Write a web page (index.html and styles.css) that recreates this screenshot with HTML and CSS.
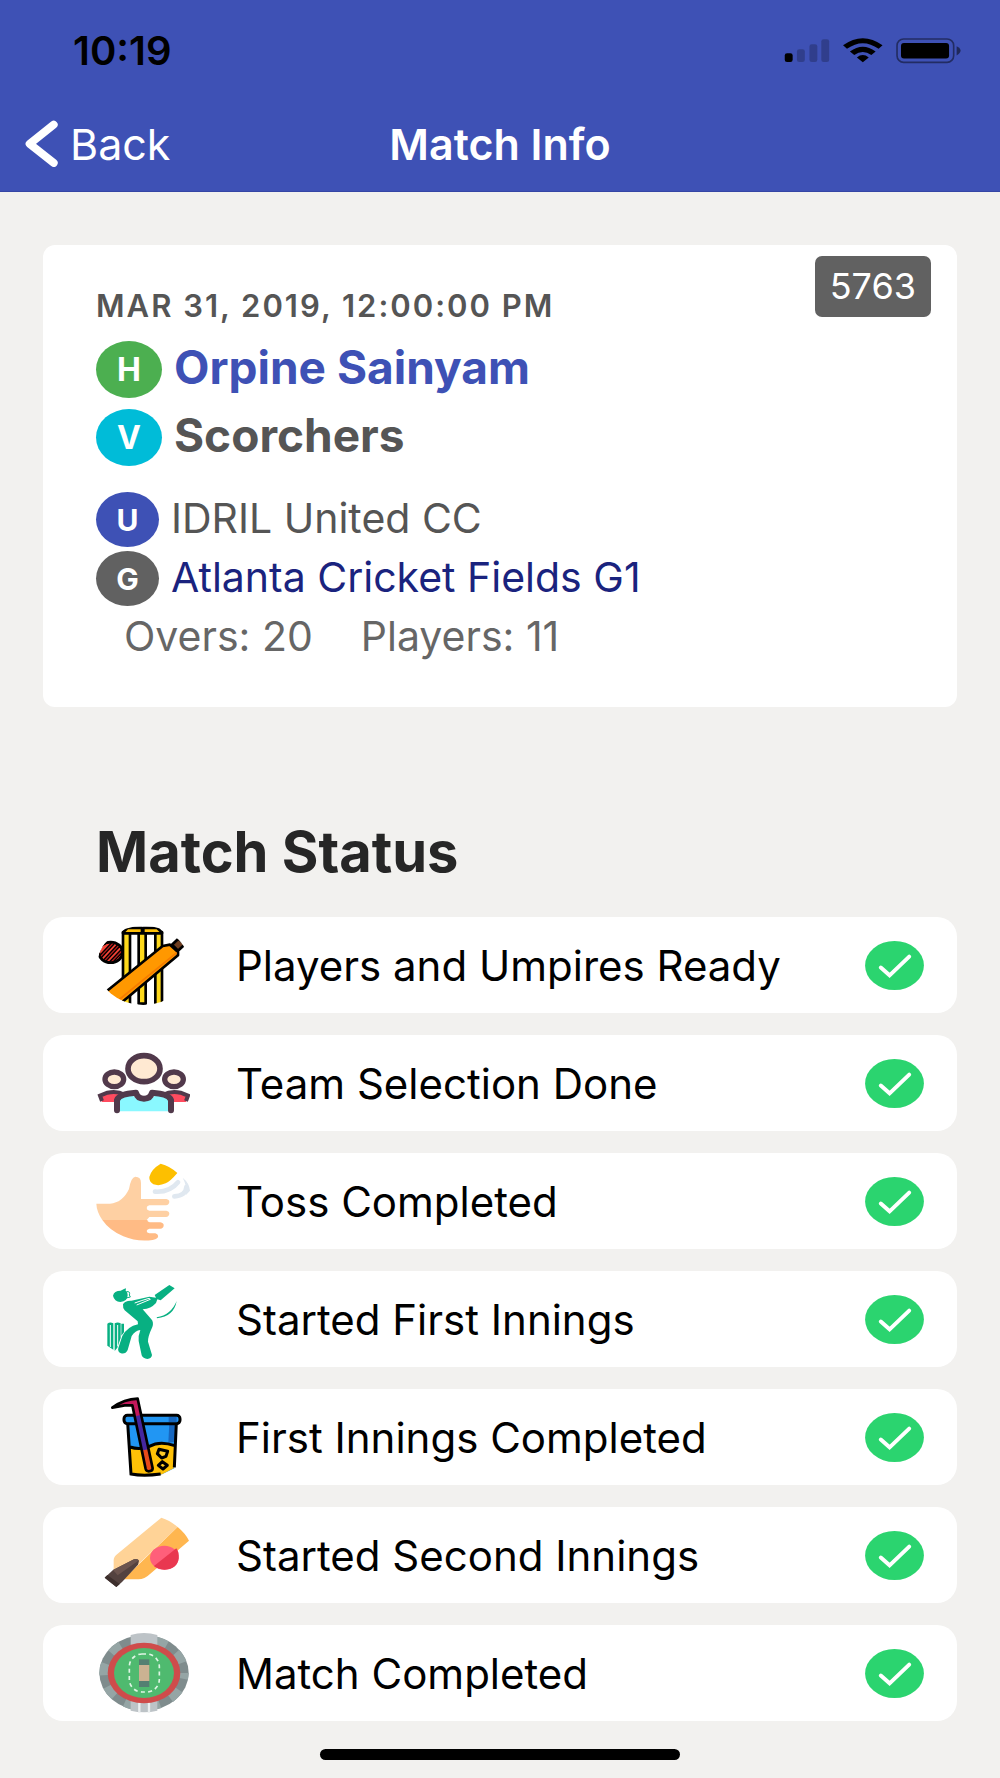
FILE: index.html
```html
<!DOCTYPE html>
<html lang="en">
<head>
<meta charset="utf-8">
<meta name="viewport" content="width=device-width, initial-scale=1">
<title>Match Info</title>
<link rel="stylesheet" href="styles.css">
</head>
<body>
<header class="header">
  <div class="status-bar">
    <time class="clock">10:19</time>
    <svg class="indicators" viewBox="850 110 540 82" aria-hidden="true">
      <rect x="852" y="159" width="24" height="27" rx="7"/>
      <g opacity=".22">
        <rect x="889" y="147" width="24" height="39" rx="7"/>
        <rect x="927" y="132" width="24" height="54" rx="7"/>
        <rect x="963" y="117" width="24" height="69" rx="7"/>
      </g>
      <path d="M1029 135Q1089 92 1149 135L1137 146Q1089 112 1041 146Z"/>
      <path d="M1050 154Q1089 125 1128 154L1115 165Q1089 146 1063 165Z"/>
      <path d="M1071 172Q1089 158 1107 172L1089 187Z"/>
      <rect x="1193" y="116" width="172" height="71" rx="20" fill="none" stroke="#000" stroke-opacity=".45" stroke-width="5"/>
      <rect x="1205" y="128" width="146" height="47" rx="9"/>
      <path d="M1374 138Q1386 144 1386 151Q1386 159 1374 166Z" opacity=".5"/>
    </svg>
  </div>
  <nav class="nav">
    <button class="back" type="button">
      <svg class="chevron" viewBox="76 360 100 142" aria-hidden="true"><path d="M163 374L90 432L163 490"/></svg>
      Back
    </button>
    <h1 class="title">Match Info</h1>
  </nav>
</header>

<main class="content">
  <section class="card">
    <span class="match-id">5763</span>
    <p class="date">Mar 31, 2019, 12:00:00 PM</p>
    <p class="line team"><span class="tag home">H</span><a href="#home">Orpine Sainyam</a></p>
    <p class="line team"><span class="tag visitor">V</span>Scorchers</p>
    <p class="line detail first"><span class="tag umpire">U</span>IDRIL United CC</p>
    <p class="line detail"><span class="tag ground">G</span><a class="venue" href="#ground">Atlanta Cricket Fields G1</a></p>
    <p class="line facts"><span>Overs: 20</span><span>Players: 11</span></p>
  </section>

  <h2 class="heading">Match Status</h2>

  <ul class="steps">
    <li class="step">
      <svg class="icon" viewBox="48 21 282 288" aria-hidden="true">
        <clipPath id="disc"><ellipse cx="190" cy="166" rx="138" ry="119"/></clipPath>
        <clipPath id="ball"><ellipse cx="92" cy="127" rx="36" ry="31"/></clipPath>
        <g clip-path="url(#disc)" stroke="#000" stroke-width="8" stroke-linejoin="round">
          <g clip-path="url(#ball)">
            <ellipse cx="92" cy="127" rx="36" ry="31" fill="#f44336"/>
            <path d="M56 146L106 92M72 154L122 100M88 162L134 114" stroke-width="12"/>
            <path d="M56 146L106 92M72 154L122 100M88 162L134 114" stroke="#b71c1c" stroke-width="4"/>
          </g>
          <ellipse cx="92" cy="127" rx="36" ry="31" fill="none"/>
          <path d="M129 66H150V300H129ZM176 66H197V281H176ZM226 66H246V300H226Z" fill="#fdd81b"/>
          <path d="M129 68L142 54H186V70H129ZM190 54H232L246 68V70H190Z" fill="#ffc107"/>
          <path d="M276 104L295 86L315 103L294 122Z" fill="#6d3d20"/>
          <path d="M74 248L248 108L270 104L294 126V136L110 290Z" fill="#ff9800"/>
          <path d="M116 270L290 128" stroke="#f57c00" stroke-width="5"/>
        </g>
      </svg>
      <span class="name">Players and Umpires Ready</span>
      <svg class="check" viewBox="0 0 60 50" role="img" aria-label="Done"><ellipse cx="30" cy="25" rx="30" ry="25"/><path d="M16 27L25 35L45 16"/></svg>
    </li>
    <li class="step">
      <svg class="icon" viewBox="48 17 282 288" aria-hidden="true">
        <path d="M58 199L80 188H126L104 218H66ZM326 199L304 188H258L280 218H318Z" fill="#ff4b5f"/>
        <path d="M66 215L60 199L82 190Q112 184 134 196M318 215L324 199L302 190Q272 184 250 196" fill="none" stroke="#51394b" stroke-width="12"/>
        <path d="M116 246V210Q124 199 158 197Q166 211 192 210Q218 211 226 197Q260 199 268 210V246Z" fill="#8af8ff"/>
        <path d="M111 243V212Q118 193 168 190Q172 208 192 208Q212 208 216 190Q266 193 273 212V243" fill="none" stroke="#51394b" stroke-width="18" stroke-linecap="round" stroke-linejoin="round"/>
        <g fill="#ffe9d2" stroke="#51394b">
          <ellipse cx="192" cy="118" rx="48" ry="39" stroke-width="17"/>
          <ellipse cx="103" cy="150" rx="28" ry="22" stroke-width="16"/>
          <ellipse cx="282" cy="150" rx="28" ry="22" stroke-width="16"/>
        </g>
      </svg>
      <span class="name">Team Selection Done</span>
      <svg class="check" viewBox="0 0 60 50" role="img" aria-label="Done"><ellipse cx="30" cy="25" rx="30" ry="25"/><path d="M16 27L25 35L45 16"/></svg>
    </li>
    <li class="step">
      <svg class="icon" viewBox="48 372 282 288" aria-hidden="true">
        <path d="M49 524H90Q128 521 147 480Q153 444 166 443Q183 443 183 462V510H259Q268 512 268 519Q267 528 258 529H208Q200 531 200 537Q200 543 208 545H259Q268 547 268 554Q267 563 258 564H208L200 573H67Q50 548 49 524Z" fill="#fed0a3"/>
        <path d="M67 573H202Q202 579 209 580H241Q252 582 251 590Q250 598 241 599H208Q200 601 200 606Q200 612 208 613H226Q236 616 234 625Q230 631 218 633Q170 639 130 622Q88 604 67 573Z" fill="#ffbb85"/>
        <path d="M242 404Q270 411 292 432Q271 457 257 463Q238 472 220 466Q207 458 208 444Q213 421 242 404Z" fill="#fdbf00"/>
        <path d="M225 488Q269 491 294 460M283 502Q318 500 319 474" fill="none" stroke="#e0e8f0" stroke-width="14" stroke-linecap="round"/>
        <path d="M308 446Q328 462 330 485L318 498Q322 472 308 446Z" fill="#e0e8f0"/>
      </svg>
      <span class="name">Toss Completed</span>
      <svg class="check" viewBox="0 0 60 50" role="img" aria-label="Done"><ellipse cx="30" cy="25" rx="30" ry="25"/><path d="M16 27L25 35L45 16"/></svg>
    </li>
    <li class="step">
      <svg class="icon" viewBox="48 6 282 288" aria-hidden="true">
        <g fill="#08b082">
          <path d="M99 80Q102 65 122 65L132 60L138 58L137 65Q143 69 143 78Q143 97 121 99Q103 98 99 80Z"/>
          <path d="M129 106Q135 94 154 95L208 83L228 86L224 78L268 48L284 58L242 94L232 91L228 102Q213 119 188 121L214 151Q222 160 217 174Q203 204 204 218L216 258Q215 269 202 270Q189 269 185 259L176 216Q174 201 181 183Q166 185 155 201L143 243Q137 256 123 253Q112 249 115 237L127 201Q142 173 174 166L173 157L134 124Q128 117 129 106Z"/>
          <path d="M82 164Q90 158 100 163V242L82 230ZM104 163Q113 158 122 163V207L112 236L104 246ZM124 164L132 164V190L124 200Z"/>
          <path d="M230 145Q273 138 290 96Q282 142 231 148Z"/>
        </g>
        <path d="M164 102Q186 94 207 88L211 91L170 108M91 168V234M113 168V232" stroke="#fff" stroke-width="3" fill="none"/>
        <path d="M139 68Q152 66 148 78L151 84L138 87" fill="none" stroke="#08b082" stroke-width="3"/>
      </svg>
      <span class="name">Started First Innings</span>
      <svg class="check" viewBox="0 0 60 50" role="img" aria-label="Done"><ellipse cx="30" cy="25" rx="30" ry="25"/><path d="M16 27L25 35L45 16"/></svg>
    </li>
    <li class="step">
      <svg class="icon" viewBox="48 362 282 288" aria-hidden="true">
        <path d="M143 462H289L283 600L246 618Q190 624 153 616Z" fill="#2196f3"/>
        <path d="M268 462H289L284 520L265 524Z" fill="#1767c0"/>
        <path d="M150 536Q180 546 208 534Q240 516 284 532L281 600L246 618Q190 624 155 616Z" fill="#ffc107"/>
        <path d="M143 464L153 617Q190 624 242 617M289 464L283 597M150 536Q180 546 208 534Q240 516 284 532" fill="none" stroke="#000" stroke-width="9"/>
        <rect x="132" y="441" width="168" height="25" rx="10" fill="#2196f3" stroke="#000" stroke-width="9"/>
        <path d="M266 446H290V461H266Z" fill="#1767c0"/>
        <path d="M158 408L173 400L218 604L200 608Z" fill="#4527a0"/>
        <path d="M157 408L173 400L182 440L166 444Z" fill="#c2185b"/>
        <path d="M189 546L205 543L218 604L200 610Z" fill="#e64a19"/>
        <path d="M97 418Q133 392 173 391L176 405L158 411L134 411Z" fill="#c2185b"/>
        <path d="M97 418Q133 392 173 391L218 600Q218 609 206 609Q199 609 197 602L157 411H134Z" fill="none" stroke="#000" stroke-width="8" stroke-linejoin="round"/>
        <path d="M237 543L263 549L258 564L245 569L232 556ZM235 591L247 580L262 591L249 602Z" fill="#ffca28" stroke="#000" stroke-width="9" stroke-linejoin="round"/>
      </svg>
      <span class="name">First Innings Completed</span>
      <svg class="check" viewBox="0 0 60 50" role="img" aria-label="Done"><ellipse cx="30" cy="25" rx="30" ry="25"/><path d="M16 27L25 35L45 16"/></svg>
    </li>
    <li class="step">
      <svg class="icon" viewBox="48 27 282 288" aria-hidden="true">
        <path d="M101 220V186Q101 176 113 167L244 59Q270 67 293 87L140 232Z" fill="#ffd397"/>
        <path d="M293 87Q316 106 327 128L210 228Q194 244 175 244H130Z" fill="#ffb64f"/>
        <ellipse cx="253" cy="179" rx="43" ry="36" fill="#ff5f7a"/>
        <path d="M289 151Q298 162 296 181Q292 214 254 215Q234 214 222 204Z" fill="#e93750"/>
        <path d="M74 239L99 216L162 184Q174 180 177 188L174 200L126 252L109 267Z" fill="#53423f"/>
        <path d="M99 216L162 184Q174 180 175 188L113 232Z" fill="#6b544e"/>
        <path d="M74 239L82 231L119 258L109 267Z" fill="#3d2f2d"/>
      </svg>
      <span class="name">Started Second Innings</span>
      <svg class="check" viewBox="0 0 60 50" role="img" aria-label="Done"><ellipse cx="30" cy="25" rx="30" ry="25"/><path d="M16 27L25 35L45 16"/></svg>
    </li>
    <li class="step">
      <svg class="icon" viewBox="48 381 282 288" aria-hidden="true">
        <ellipse cx="192" cy="525" rx="134" ry="114" fill="#7f8c8d"/>
        <ellipse cx="192" cy="525" rx="121" ry="101" fill="none" stroke="#95a5a5" stroke-width="26" stroke-dasharray="36 36" stroke-dashoffset="18"/>
        <path d="M152 411Q192 399 232 411V450H152ZM152 600H232V638Q192 648 152 638Z" fill="#bdc3c7"/>
        <path d="M178 610V644M207 610V644" stroke="#ecf0f1" stroke-width="7"/>
        <ellipse cx="192" cy="525" rx="109" ry="91" fill="#cf4c4b"/>
        <ellipse cx="192" cy="525" rx="90" ry="75" fill="#4fba6f"/>
        <rect x="148" y="468" width="90" height="114" rx="38" fill="none" stroke="#dff5e5" stroke-width="5" stroke-dasharray="12 10"/>
        <path d="M177 484H208V567H177Z" fill="#548072"/>
        <path d="M177 501H208V549H177Z" fill="#cbb292"/>
      </svg>
      <span class="name">Match Completed</span>
      <svg class="check" viewBox="0 0 60 50" role="img" aria-label="Done"><ellipse cx="30" cy="25" rx="30" ry="25"/><path d="M16 27L25 35L45 16"/></svg>
    </li>
  </ul>
</main>
<div class="home-indicator"></div>
</body>
</html>
```
FILE: styles.css
```css
* {
  box-sizing: border-box;
}

body {
  display: flex;
  flex-direction: column;
  min-height: 100vh;
  margin: 0;
  background: #f2f1ef;
  color: #000;
  font-family: Inter, "Liberation Sans", sans-serif;
}

h1, h2, p, ul {
  margin: 0;
  padding: 0;
}

a {
  color: inherit;
  text-decoration: none;
}

.header {
  background: #3e51b5;
  border-bottom: 1px solid #3546a5;
}

.status-bar {
  display: flex;
  align-items: center;
  justify-content: space-between;
  height: 100px;
  padding: 0 37px 0 73px;
}

.clock {
  font-size: 40px;
  font-weight: 600;
}

.indicators {
  width: 180px;
  height: 27px;
}

.nav {
  display: grid;
  grid-template-columns: 1fr auto 1fr;
  align-items: center;
  height: 91px;
  padding: 0 25px 4px;
  color: #fff;
}

.back {
  display: flex;
  align-items: center;
  justify-self: start;
  gap: 12px;
  padding: 0;
  border: 0;
  background: none;
  color: inherit;
  font: 400 43px/48px Inter, "Liberation Sans", sans-serif;
}

.chevron {
  width: 33px;
  height: 47px;
  fill: none;
  stroke: #fff;
  stroke-width: 24;
  stroke-linecap: round;
  stroke-linejoin: round;
}

.title {
  font-size: 43px;
  font-weight: 600;
  line-height: 48px;
}

.content {
  padding: 53px 43px 0;
}

.card {
  position: relative;
  padding: 42px 53px 42px;
  border-radius: 12px;
  background: #fff;
  color: #555;
}

.match-id {
  position: absolute;
  top: 11px;
  right: 26px;
  padding: 6px 15px;
  border-radius: 7px;
  background: #616161;
  color: #fff;
  font-size: 36px;
  line-height: 49px;
}

.date {
  margin-bottom: 8px;
  font-size: 31px;
  font-weight: 600;
  line-height: 38px;
  letter-spacing: 2px;
  text-transform: uppercase;
}

.line {
  display: flex;
  align-items: center;
  gap: 12px;
}

.team {
  height: 68px;
  font-size: 46px;
  font-weight: 700;
}

.team a {
  color: #3e51b5;
}

.detail,
.facts {
  height: 59px;
  font-size: 41px;
}

.first {
  margin-top: 19px;
}

.venue {
  color: #1a237e;
}

.facts {
  gap: 48px;
  padding-left: 28px;
  color: #666;
}

.tag {
  display: grid;
  place-items: center;
  width: 66px;
  height: 57px;
  margin-top: 4px;
  border-radius: 50%;
  color: #fff;
  font-size: 32px;
  font-weight: 700;
}

.detail .tag {
  width: 63px;
  height: 55px;
  font-size: 30px;
}

.home { background: #4caf50; }
.visitor { background: #00bcd8; }
.umpire { background: #3e51b5; }
.ground { background: #616161; }

.heading {
  padding: 115px 53px 35px;
  color: #262626;
  font-size: 56px;
  font-weight: 700;
  line-height: 60px;
}

.steps {
  display: grid;
  gap: 22px;
  list-style: none;
}

.step {
  display: grid;
  grid-template-columns: 94px 1fr 59px;
  align-items: center;
  height: 96px;
  padding: 0 33px 0 53px;
  column-gap: 46px;
  border-radius: 20px;
  background: #fff;
}

.icon {
  width: 94px;
  height: 96px;
}

.name {
  font-size: 42px;
  white-space: nowrap;
}

.check {
  width: 59px;
  height: 49px;
  fill: #2bd46f;
}

.check path {
  fill: none;
  stroke: #fff;
  stroke-width: 4;
  stroke-linecap: round;
}

.home-indicator {
  width: 36%;
  height: 11px;
  margin: auto auto 18px;
  border-radius: 6px;
  background: #000;
}
```
